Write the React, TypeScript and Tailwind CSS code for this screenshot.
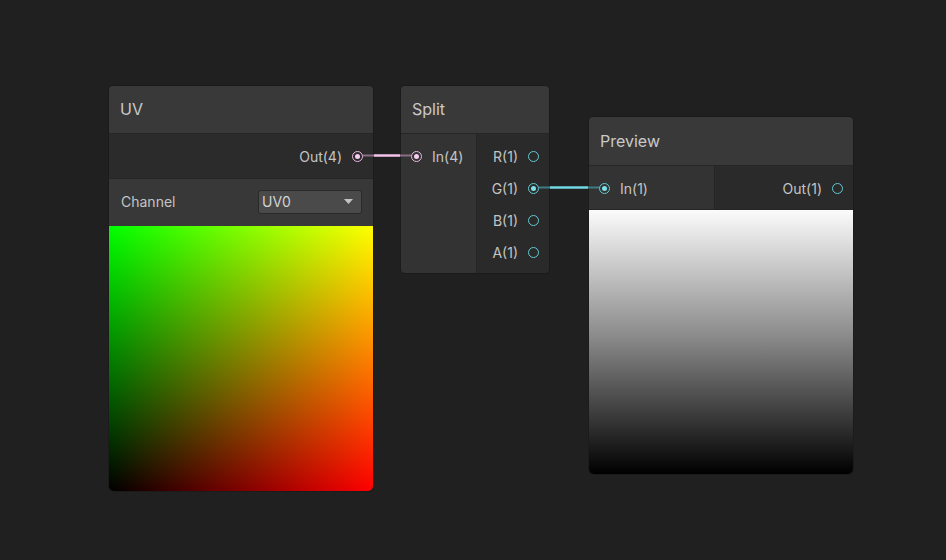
import type { ReactNode } from "react";

type PortProps = {
  kind: "pink" | "cyan";
  connected?: boolean;
};

function Port({ kind, connected }: PortProps) {
  const ring = kind === "pink" ? "border-[#e9b6e1]" : "border-[#63c9d2]";
  const dot = kind === "pink" ? "bg-[#f6cdef]" : "bg-[#7ee0ea]";
  return (
    <span className={`flex h-[11px] w-[11px] shrink-0 items-center justify-center rounded-full border-[1.5px] ${ring}`}>
      {connected ? <span className={`h-[5px] w-[5px] rounded-full ${dot}`} /> : null}
    </span>
  );
}

function Header({ title, h }: { title: string; h: string }) {
  return (
    <div className={`flex items-center border-b border-[#262626] bg-[#393939] px-[11px] pb-[1px] text-[16px] text-[#c9c9c9] ${h}`}>
      {title}
    </div>
  );
}

function OutRow({ label, kind, connected, h }: { label: string; kind: "pink" | "cyan"; connected?: boolean; h: string }) {
  return (
    <div className={`flex items-center justify-end gap-[10px] pr-[10px] text-[14px] text-[#c4c4c4] ${h}`}>
      <span>{label}</span>
      <Port kind={kind} connected={connected} />
    </div>
  );
}

function InRow({ label, kind, connected, h }: { label: string; kind: "pink" | "cyan"; connected?: boolean; h: string }) {
  return (
    <div className={`flex items-center gap-[10px] pl-[10px] text-[14px] text-[#c4c4c4] ${h}`}>
      <Port kind={kind} connected={connected} />
      <span>{label}</span>
    </div>
  );
}

function Node({ className, children }: { className: string; children: ReactNode }) {
  return (
    <div className={`absolute flex flex-col overflow-hidden rounded-[5px] border border-[#1b1b1b] ${className}`}>
      {children}
    </div>
  );
}

export default function App() {
  return (
    <div
      className="relative h-[560px] w-[946px] overflow-hidden bg-[#202020]"
      style={{ fontFamily: "Inter, 'Noto Sans', sans-serif" }}
    >
      {/* UV node */}
      <Node className="left-[108px] top-[85px] w-[266px]">
        <Header title="UV" h="h-[48px]" />
        <div className="border-b border-[#262626] bg-[#2b2b2b]">
          <OutRow label="Out(4)" kind="pink" connected h="h-[44px]" />
        </div>
        <div className="flex h-[47px] items-center justify-between bg-[#383838] pb-[2px] pl-[12px] pr-[11px] text-[14px] text-[#c4c4c4]">
          <span>Channel</span>
          <div className="flex h-[24px] w-[104px] items-center justify-between rounded-[3px] border border-[#2a2a2a] bg-[#4a4a4a] pl-[3px] pr-[8px] text-[#d2d2d2]">
            <span>UV0</span>
            <svg width="9" height="5" viewBox="0 0 9 5">
              <path d="M0 0 H9 L4.5 5 Z" fill="#c4c4c4" />
            </svg>
          </div>
        </div>
        <div className="h-[265px] rounded-b-[5px] bg-[linear-gradient(to_bottom,#00ff00,#000000),linear-gradient(to_right,#000000,#ff0000)] bg-blend-screen" />
      </Node>

      {/* Split node */}
      <Node className="left-[400px] top-[85px] w-[150px]">
        <Header title="Split" h="h-[48px]" />
        <div className="flex h-[139px]">
          <div className="w-[76px] border-r border-[#252525] bg-[#333333]">
            <InRow label="In(4)" kind="pink" connected h="h-[44px]" />
          </div>
          <div className="flex flex-1 flex-col bg-[#2a2a2a] pt-[6px]">
            <OutRow label="R(1)" kind="cyan" h="h-[32px]" />
            <OutRow label="G(1)" kind="cyan" connected h="h-[32px]" />
            <OutRow label="B(1)" kind="cyan" h="h-[32px]" />
            <OutRow label="A(1)" kind="cyan" h="h-[32px]" />
          </div>
        </div>
      </Node>

      {/* Preview node */}
      <Node className="left-[588px] top-[116px] w-[266px]">
        <Header title="Preview" h="h-[49px]" />
        <div className="flex h-[44px] border-b border-[#262626]">
          <div className="w-[126px] border-r border-[#252525] bg-[#333333]">
            <InRow label="In(1)" kind="cyan" connected h="h-[44px]" />
          </div>
          <div className="flex-1 bg-[#2a2a2a]">
            <OutRow label="Out(1)" kind="cyan" h="h-[44px]" />
          </div>
        </div>
        <div className="h-[264px] rounded-b-[5px] bg-[linear-gradient(to_bottom,#fbfbfb,#8a8a8a_48%,#000000)]" />
      </Node>

      {/* edges */}
      <svg className="pointer-events-none absolute left-0 top-0" width="946" height="560">
        <line x1="363" y1="155.5" x2="374" y2="155.5" stroke="#8a6c86" strokeWidth="2" />
        <line x1="374" y1="155.5" x2="400" y2="155.5" stroke="#f5c4ee" strokeWidth="2.5" />
        <line x1="400" y1="155.5" x2="411" y2="155.5" stroke="#8a6c86" strokeWidth="2" />
        <line x1="539" y1="187.5" x2="550" y2="187.5" stroke="#3d7d84" strokeWidth="2" />
        <line x1="550" y1="187.5" x2="588" y2="187.5" stroke="#72d9e4" strokeWidth="2.5" />
        <line x1="588" y1="187.5" x2="599" y2="187.5" stroke="#3d7d84" strokeWidth="2" />
      </svg>
    </div>
  );
}
